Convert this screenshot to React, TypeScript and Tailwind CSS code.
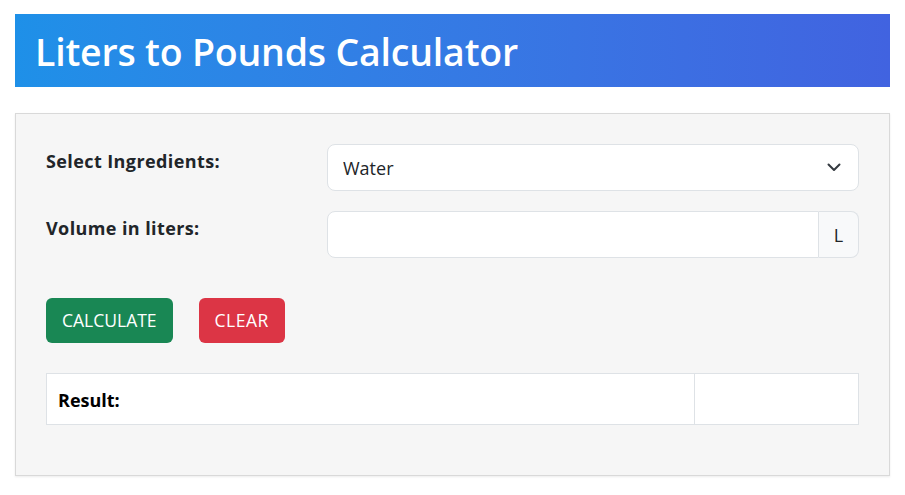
import { useState } from "react";

export default function App() {
  const [volume, setVolume] = useState("");
  const [result, setResult] = useState("");

  return (
    <div className="min-h-screen bg-white px-[15px] pt-[14px] font-['Segoe_UI','Open_Sans',sans-serif] text-[#212529]">
      {/* Header */}
      <div className="flex h-[73px] items-center bg-gradient-to-r from-[#1e90e8] to-[#4163e0] px-[20px]">
        <h1 className="pt-[2px] text-[37.5px] font-semibold leading-none tracking-[-0.2px] text-white">
          Liters to Pounds Calculator
        </h1>
      </div>

      {/* Card */}
      <div className="mt-[26px] border border-[#d9d9d9] bg-[#f6f6f6] px-[30px] pb-[50px] pt-[30px] shadow-[0_1px_2px_rgba(0,0,0,0.08)]">
        <div className="flex gap-[8px]">
          <label className="w-[273px] pt-[4px] text-[18px] font-bold tracking-[0.4px]">
            Select Ingredients:
          </label>
          <div className="relative flex-1">
            <select className="h-[47px] w-full appearance-none rounded-[8px] border border-[#dee2e6] bg-white px-[15px] pt-[2px] text-[18px] text-[#212529] outline-none">
              <option>Water</option>
              <option>Milk</option>
              <option>Olive oil</option>
            </select>
            <svg
              className="pointer-events-none absolute right-[18px] top-[18px]"
              width="14"
              height="10"
              viewBox="0 0 14 10"
              fill="none"
              stroke="#343a40"
              strokeWidth="2"
              strokeLinecap="round"
              strokeLinejoin="round"
            >
              <path d="M1.5 2.5 7 8 12.5 2.5" />
            </svg>
          </div>
        </div>

        <div className="mt-[20px] flex gap-[8px]">
          <label className="w-[273px] pt-[4px] text-[18px] font-bold tracking-[0.4px]">
            Volume in liters:
          </label>
          <div className="flex flex-1">
            <input
              value={volume}
              onChange={(e) => setVolume(e.target.value)}
              className="h-[47px] flex-1 rounded-l-[8px] border border-[#dee2e6] bg-white px-[15px] text-[18px] outline-none"
            />
            <span className="flex h-[47px] w-[40px] items-center justify-center rounded-r-[8px] border border-l-0 border-[#dee2e6] bg-[#f8f9fa] pt-[2px] text-[18px]">
              L
            </span>
          </div>
        </div>

        {/* Buttons */}
        <div className="mt-[40px] flex gap-[26px]">
          <button
            onClick={() => setResult(volume ? (parseFloat(volume) * 2.20462).toFixed(2) + " lb" : "")}
            className="h-[45px] rounded-[6px] bg-[#198754] px-[16px] text-[17.5px] text-white"
          >
            CALCULATE
          </button>
          <button
            onClick={() => {
              setVolume("");
              setResult("");
            }}
            className="h-[45px] rounded-[6px] bg-[#dc3545] px-[16px] text-[17.5px] tracking-[0.5px] text-white"
          >
            CLEAR
          </button>
        </div>

        {/* Result */}
        <div className="mt-[30px] flex h-[52px] border border-[#dee2e6] bg-white">
          <div className="flex flex-1 items-center border-r border-[#dee2e6] px-[11px] pt-[2px] text-[18px] font-bold text-black">
            Result:
          </div>
          <div className="flex w-[163px] items-center px-[11px] text-[17px]">{result}</div>
        </div>
      </div>
    </div>
  );
}
